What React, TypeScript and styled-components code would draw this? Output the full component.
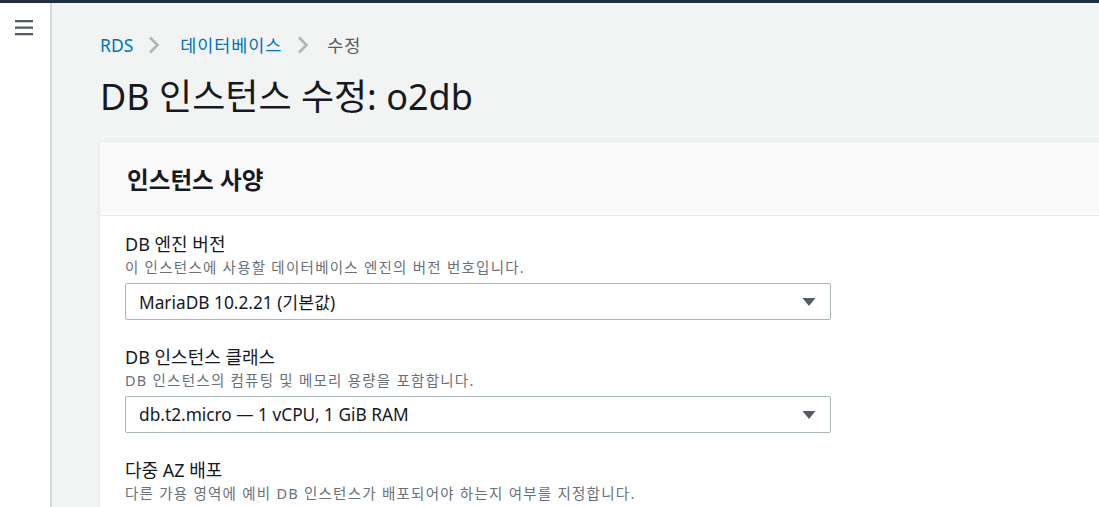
import React from "react";
import styled, { createGlobalStyle } from "styled-components";

const Global = createGlobalStyle`
  html, body { margin: 0; padding: 0; }
  body {
    font-family: "Noto Sans", "Noto Sans CJK KR", sans-serif;
    background: #f2f3f3;
    overflow: hidden;
  }
`;

const Page = styled.div`
  width: 1099px;
  height: 507px;
  display: flex;
  flex-direction: column;
  overflow: hidden;
`;

const TopBar = styled.div`
  height: 3px;
  background: #232f3e;
  flex: none;
`;

const Body = styled.div`
  flex: 1;
  display: flex;
  min-height: 0;
`;

const Sidebar = styled.div`
  width: 52px;
  flex: none;
  background: #ffffff;
  border-right: 2px solid #d5dbdb;
  display: flex;
  justify-content: center;
  align-items: flex-start;
  padding: 16px 2px 0 0;
  box-sizing: border-box;
`;

const Main = styled.main`
  flex: 1;
  padding: 30px 0 0 47px;
  min-width: 0;
  display: flex;
  flex-direction: column;
`;

const Crumbs = styled.nav`
  display: flex;
  align-items: center;
  font-size: 17.5px;
  line-height: 24px;
  height: 24px;
  padding-left: 1px;
`;

const CrumbLink = styled.span<{ $current?: boolean; $spaced?: boolean }>`
  color: ${(p) => (p.$current ? "#545b64" : "#0073bb")};
  letter-spacing: ${(p) => (p.$spaced ? "0.9px" : "0")};
`;

const Sep = styled.span<{ $after: number }>`
  display: inline-flex;
  margin: 0 ${(p) => p.$after}px 0 15px;
`;

const Title = styled.h1`
  margin: 18px 0 0 1px;
  font-size: 36px;
  font-weight: 400;
  line-height: 44px;
  color: #16191f;
`;

const Card = styled.section`
  margin-top: 22px;
  flex: 1;
  background: #ffffff;
  border-top: 1px solid #eaeded;
  border-left: 1px solid #eaeded;
  box-shadow: 0 1px 1px rgba(0, 27, 43, 0.1);
`;

const CardHeader = styled.header`
  background: #fafafa;
  border-bottom: 1px solid #eaeded;
  height: 74px;
  padding: 0 27px;
  display: flex;
  align-items: center;
  box-sizing: border-box;
`;

const CardTitle = styled.h2`
  margin: 0;
  font-size: 23.6px;
  font-weight: 700;
  color: #16191f;
`;

const CardBody = styled.div`
  padding: 16px 25px 0 25px;
`;

const Field = styled.div`
  margin-bottom: 25px;
`;

const Label = styled.div`
  font-size: 18px;
  line-height: 24px;
  color: #16191f;
`;

const Desc = styled.div`
  font-size: 14.5px;
  letter-spacing: 1.25px;
  line-height: 22px;
  color: #687078;
  margin-bottom: 5px;
`;

const Select = styled.div`
  width: 706px;
  height: 37px;
  box-sizing: border-box;
  border: 1px solid #aab7b8;
  border-radius: 2px;
  display: flex;
  align-items: center;
  justify-content: space-between;
  padding: 0 14px 0 13px;
  font-size: 17.3px;
  color: #16191f;
  background: #fff;
`;

const Chevron = () => (
  <svg width="12" height="18" viewBox="0 0 12 18">
    <path d="M2 1.5 L9.5 9 L2 16.5" fill="none" stroke="#aab7b8" strokeWidth="2.6" />
  </svg>
);

const Caret = () => (
  <svg width="14" height="10" viewBox="0 0 14 10">
    <path d="M0.5 1 L13.5 1 L7 9 Z" fill="#545b64" />
  </svg>
);

const Menu = () => (
  <svg width="18" height="17" viewBox="0 0 18 17">
    <rect x="0" y="1" width="18" height="2.3" fill="#545b64" />
    <rect x="0" y="7.5" width="18" height="2.3" fill="#545b64" />
    <rect x="0" y="14" width="18" height="2.3" fill="#545b64" />
  </svg>
);

export default function App() {
  return (
    <Page>
      <Global />
      <TopBar />
      <Body>
        <Sidebar>
          <Menu />
        </Sidebar>
        <Main>
          <Crumbs>
            <CrumbLink>RDS</CrumbLink>
            <Sep $after={20}><Chevron /></Sep>
            <CrumbLink $spaced>데이터베이스</CrumbLink>
            <Sep $after={18}><Chevron /></Sep>
            <CrumbLink $current $spaced>수정</CrumbLink>
          </Crumbs>
          <Title>DB 인스턴스 수정: o2db</Title>
          <Card>
            <CardHeader>
              <CardTitle>인스턴스 사양</CardTitle>
            </CardHeader>
            <CardBody>
              <Field>
                <Label>DB 엔진 버전</Label>
                <Desc>이 인스턴스에 사용할 데이터베이스 엔진의 버전 번호입니다.</Desc>
                <Select>
                  <span>MariaDB 10.2.21 (기본값)</span>
                  <Caret />
                </Select>
              </Field>
              <Field>
                <Label>DB 인스턴스 클래스</Label>
                <Desc>DB 인스턴스의 컴퓨팅 및 메모리 용량을 포함합니다.</Desc>
                <Select>
                  <span>db.t2.micro — 1 vCPU, 1 GiB RAM</span>
                  <Caret />
                </Select>
              </Field>
              <Field>
                <Label>다중 AZ 배포</Label>
                <Desc>다른 가용 영역에 예비 DB 인스턴스가 배포되어야 하는지 여부를 지정합니다.</Desc>
              </Field>
            </CardBody>
          </Card>
        </Main>
      </Body>
    </Page>
  );
}
